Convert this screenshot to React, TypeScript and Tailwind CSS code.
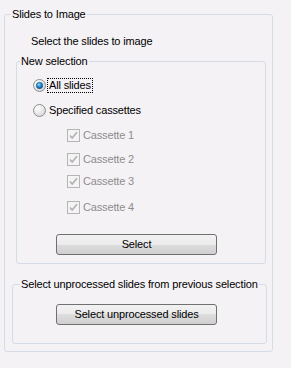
const CASSETTES = [
  { label: "Cassette 1", mt: "mt-[9px]" },
  { label: "Cassette 2", mt: "mt-[8px]" },
  { label: "Cassette 3", mt: "mt-[6px]" },
  { label: "Cassette 4", mt: "mt-[10px]" },
]

function Radio({ checked }: { checked?: boolean }) {
  return (
    <svg width="13" height="13" viewBox="0 0 13 13" className="shrink-0">
      <defs>
        <radialGradient id={checked ? "rOn" : "rOff"} cx="0.35" cy="0.3" r="0.8">
          <stop offset="0" stopColor="#ffffff" />
          <stop offset="1" stopColor="#d4d4d4" />
        </radialGradient>
        <radialGradient id="dot" cx="0.4" cy="0.35" r="0.7">
          <stop offset="0" stopColor="#8fe0ff" />
          <stop offset="0.5" stopColor="#1e8fd6" />
          <stop offset="1" stopColor="#0a4f8a" />
        </radialGradient>
      </defs>
      <circle cx="6.5" cy="6.5" r="6" fill={`url(#${checked ? "rOn" : "rOff"})`} stroke="#8e8f8f" strokeWidth="1" />
      {checked && <circle cx="6.5" cy="6.5" r="3.2" fill="url(#dot)" stroke="#174a78" strokeWidth="0.6" />}
    </svg>
  )
}

function DisabledCheck() {
  return (
    <svg width="13" height="13" viewBox="0 0 13 13" className="shrink-0">
      <rect x="0.5" y="0.5" width="12" height="12" fill="#f4f4f4" stroke="#b5b5b5" />
      <path d="M3 6.5 L5.2 9 L10 3.2" fill="none" stroke="#b0b0b0" strokeWidth="1.6" />
    </svg>
  )
}

function Button({ children }: { children: React.ReactNode }) {
  return (
    <button className="w-[161px] h-[21px] border border-[#707070] rounded-[3px] bg-[linear-gradient(#f2f2f2_0%,#ebebeb_50%,#dddddd_50%,#cfcfcf_100%)] text-black leading-[13px] text-center">
      {children}
    </button>
  )
}

export default function App() {
  return (
    <div className="w-[291px] h-[368px] bg-[#f5f2f5] text-[11px] leading-[14px] tracking-[-0.15px] text-black font-['Liberation_Sans',Arial,sans-serif] overflow-hidden pt-[7px]">
      <fieldset className="ml-[4px] w-[269px] border border-[#d5dce6] rounded-[3px] pb-[7px]">
        <legend className="ml-[6px] px-[1px] leading-[14px]">Slides to Image</legend>

        <div className="mt-[13px] ml-[26px]">Select the slides to image</div>

        <fieldset className="mt-[6px] ml-[11px] w-[250px] border border-[#d5dce6] rounded-[3px] pb-[8px]">
          <legend className="ml-[3px] px-[1px] leading-[14px]">New selection</legend>

          <div className="mt-[9px] ml-[16px] flex items-center h-[16px]">
            <Radio checked />
            <span className="ml-[2px] px-[1px] outline outline-1 outline-dotted outline-black leading-[13px]">All slides</span>
          </div>

          <div className="mt-[9px] ml-[16px] flex items-center gap-[3px] h-[16px]">
            <Radio />
            <span>Specified cassettes</span>
          </div>

          {CASSETTES.map(c => (
            <div key={c.label} className={`${c.mt} ml-[50px] flex items-center gap-[3px] h-[16px] text-[#8d8d8d]`}>
              <DisabledCheck />
              <span>{c.label}</span>
            </div>
          ))}

          <div className="mt-[19px] ml-[39px]">
            <Button>Select</Button>
          </div>
        </fieldset>

        <fieldset className="mt-[13px] ml-[7px] w-[255px] border border-[#d5dce6] rounded-[3px] pb-[18px]">
          <legend className="ml-[7px] px-[1px] leading-[14px]">Select unprocessed slides from previous selection</legend>
          <div className="mt-[13px] ml-[43px]">
            <Button>Select unprocessed slides</Button>
          </div>
        </fieldset>
      </fieldset>
    </div>
  )
}
